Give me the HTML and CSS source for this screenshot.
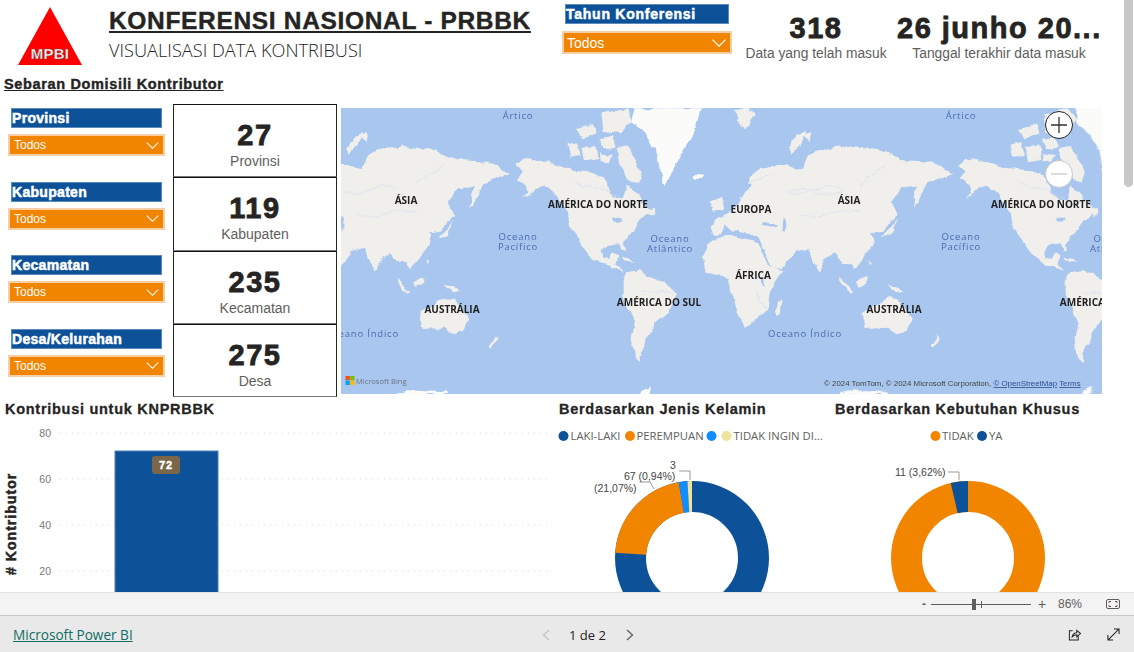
FILE: index.html
```html
<!DOCTYPE html>
<html lang="id">
<head>
<meta charset="utf-8">
<title>Konferensi Nasional - PRBBK</title>
<link rel="stylesheet" href="styles.css">
</head>
<body>
<svg class="defs" width="0" height="0" aria-hidden="true">
  <defs>
    <filter id="coast" x="-5%" y="-5%" width="110%" height="110%">
      <feTurbulence type="fractalNoise" baseFrequency="0.07" numOctaves="3" seed="4" result="n"/>
      <feDisplacementMap in="SourceGraphic" in2="n" scale="7" xChannelSelector="R" yChannelSelector="G"/>
      <feGaussianBlur stdDeviation="0.35"/>
    </filter>
    <symbol id="chev" viewBox="0 0 14 8"><path d="M.5.7 7 7.200 13.500.7" fill="none" stroke="#fff" stroke-width="1.200"/></symbol>
    <g id="world">
      <g class="land">
        <!-- North America -->
        <path d="M530,178 548,165 575,158 610,170 640,178 668,186 700,195 740,198 785,212 800,235 806,262 830,285 852,285 858,262 862,240 885,258 905,285 935,320 915,335 900,345 880,375 858,405 848,418 852,440 842,438 835,415 800,420 785,435 790,458 808,462 815,442 832,450 826,478 838,488 852,505 835,498 812,482 780,475 750,450 722,415 692,375 684,330 650,275 612,242 590,248 570,268 545,284 565,262 560,240 530,226 548,205Z"/>
        <!-- South America -->
        <path d="M858,502 900,495 950,522 985,545 1015,565 1000,600 985,622 950,650 925,690 905,735 895,775 882,762 875,700 885,650 862,605 848,565 848,530Z"/>
        <!-- Arctic Canada -->
        <path d="M682,118 715,112 725,150 690,155ZM728,125 770,125 775,165 735,172ZM830,130 860,120 905,200 895,232 865,225 838,180ZM785,25 860,12 880,45 840,85 790,78ZM705,72 760,60 770,85 725,100ZM775,100 815,92 828,125 790,130ZM780,145 815,150 805,172 782,168Z"/>
        <!-- Islands by the Americas -->
        <path d="M842,456 872,462 880,470 850,466ZM926,315 945,312 946,330 930,332Z"/>
        <g transform="translate(1182 0)">
          <!-- Eurasia -->
          <path d="M-67,372 -55,342 -25,328 -5,318 15,290 30,252 45,215 80,190 110,182 150,178 210,192 225,150 265,132 330,122 430,135 500,165 590,170 655,205 600,225 575,240 548,305 540,270 555,245 500,250 470,290 490,332 465,360 445,380 412,385 420,420 390,450 360,492 345,472 322,470 296,440 268,470 255,500 232,465 222,432 185,440 145,490 115,492 88,420 75,398 50,385 15,378 -5,380 -30,358 -42,385 -62,388Z"/>
          <!-- Africa -->
          <path d="M-97,460 -75,420 -50,395 0,392 50,405 78,418 110,488 150,495 125,530 108,560 100,610 65,650 32,668 12,630 0,595 -18,530 -50,510 -85,500Z"/>
          <!-- Australia and Oceania -->
          <path d="M385,622 430,598 445,585 470,580 492,582 505,605 530,640 515,680 490,690 460,668 395,672Z"/>
          <path d="M128,590 145,585 140,625 126,630ZM590,722 612,688 618,700 596,728ZM460,540 490,545 510,565 485,560ZM320,516 355,565 348,568 318,530ZM366,530 398,512 396,540 372,546ZM540,308 548,262 556,245 548,300ZM440,398 478,362 490,345 470,390ZM404,460 412,470 404,478Z"/>
          <!-- Europe islands, Svalbard, Novaya Zemlya -->
          <path d="M-70,290 -42,275 -32,315 -64,320ZM165,128 190,95 220,80 200,120 170,150ZM0,15 40,10 65,30 30,70 10,55ZM205,90 235,82 230,110Z"/>
        </g>
      </g>
      <path class="ice" d="M880,10 1082,10 1060,90 1010,180 975,245 960,200 950,140 920,90 880,50Z"/>
      <ellipse class="ice" cx="1078" cy="216" rx="14" ry="9"/>
      <path class="ice" d="M905,855 930,842 925,870 900,870ZM170,862 200,856 320,862 320,870 170,870Z"/>
      <g class="water">
        <ellipse cx="830" cy="344" rx="14" ry="6"/>
        <ellipse cx="1284" cy="356" rx="24" ry="6"/>
        <ellipse cx="1332" cy="358" rx="7" ry="22"/>
        <path d="M1190,260 1215,225 1230,240 1208,280Z"/>
        <ellipse cx="1270" cy="530" rx="4" ry="12"/>
      </g>
      <path class="rivers" d="M1340,260C1400,290 1440,220 1500,250M1380,330C1440,350 1500,300 1560,320M1220,230 1300,210M700,230C760,260 800,240 860,300M20,260C70,230 120,290 180,260M1560,240C1580,210 1620,200 1640,180M900,560C930,570 960,555 1000,565M1245,560C1250,590 1275,600 1280,615"/>
    </g>
  </defs>
</svg>

<main class="report">
  <header class="header">
    <svg class="logo" viewBox="0 0 64 58">
      <path d="M32 0 64 58H0Z" fill="#f00"/>
      <text x="32" y="52" class="logo-text">MPBI</text>
    </svg>
    <div class="titles">
      <h1 class="title">KONFERENSI NASIONAL - PRBBK</h1>
      <p class="subtitle">VISUALISASI DATA KONTRIBUSI</p>
    </div>
    <div class="year">
      <div class="slicer-title slicer-title-year">Tahun Konferensi</div>
      <div class="dropdown dropdown-year"><span>Todos</span><svg class="chev-year"><use href="#chev"/></svg></div>
    </div>
    <div class="kpi kpi-count">
      <div class="kpi-value">318</div>
      <div class="kpi-label">Data yang telah masuk</div>
    </div>
    <div class="kpi kpi-date">
      <div class="kpi-value">26 junho 20...</div>
      <div class="kpi-label">Tanggal terakhir data masuk</div>
    </div>
  </header>

  <h2 class="section-title">Sebaran Domisili Kontributor</h2>

  <section class="mid">
    <div class="filters">
      <div class="filter">
        <div class="slicer-title">Provinsi</div>
        <div class="dropdown"><span>Todos</span><svg class="chev"><use href="#chev"/></svg></div>
      </div>
      <div class="filter">
        <div class="slicer-title">Kabupaten</div>
        <div class="dropdown"><span>Todos</span><svg class="chev"><use href="#chev"/></svg></div>
      </div>
      <div class="filter">
        <div class="slicer-title">Kecamatan</div>
        <div class="dropdown"><span>Todos</span><svg class="chev"><use href="#chev"/></svg></div>
      </div>
      <div class="filter">
        <div class="slicer-title">Desa/Kelurahan</div>
        <div class="dropdown"><span>Todos</span><svg class="chev"><use href="#chev"/></svg></div>
      </div>
    </div>

    <div class="cards">
      <div class="card"><div class="card-value">27</div><div class="card-label">Provinsi</div></div>
      <div class="card"><div class="card-value">119</div><div class="card-label">Kabupaten</div></div>
      <div class="card"><div class="card-value">235</div><div class="card-label">Kecamatan</div></div>
      <div class="card"><div class="card-value">275</div><div class="card-label">Desa</div></div>
    </div>

    <div class="map">
      <svg class="map-svg" viewBox="341 108 761 286">
        <rect x="341" y="108" width="761" height="286" class="sea"/>
        <g filter="url(#coast)">
          <g transform="translate(340 105) scale(.33333)"><use href="#world"/></g>
          <g transform="translate(783 105) scale(.33333)"><use href="#world"/></g>
          <g transform="translate(-103 105) scale(.33333)"><use href="#world"/></g>
        </g>
        <g class="ocean">
          <text x="518" y="119">Ártico</text>
          <text x="961" y="119">Ártico</text>
          <text x="518" y="240">Oceano</text>
          <text x="518" y="250">Pacífico</text>
          <text x="961" y="240">Oceano</text>
          <text x="961" y="250">Pacífico</text>
          <text x="670" y="242">Oceano</text>
          <text x="670" y="252">Atlântico</text>
          <text x="362" y="337">Oceano Índico</text>
          <text x="805" y="337">Oceano Índico</text>
          <text x="1113" y="242">Oceano</text>
          <text x="1113" y="252">Atlântico</text>
        </g>
        <g class="continent">
          <text x="406" y="204">ÁSIA</text>
          <text x="849" y="204">ÁSIA</text>
          <text x="598" y="208">AMÉRICA DO NORTE</text>
          <text x="1041" y="208">AMÉRICA DO NORTE</text>
          <text x="751" y="213">EUROPA</text>
          <text x="753" y="279">ÁFRICA</text>
          <text x="452" y="313">AUSTRÁLIA</text>
          <text x="894" y="313">AUSTRÁLIA</text>
          <text x="659" y="306">AMÉRICA DO SUL</text>
          <text x="1102" y="306">AMÉRICA DO SUL</text>
        </g>
        <g>
          <rect x="345.500" y="376" width="4.300" height="4.300" fill="#f25022"/>
          <rect x="350.200" y="376" width="4.300" height="4.300" fill="#7fba00"/>
          <rect x="345.500" y="380.700" width="4.300" height="4.300" fill="#00a4ef"/>
          <rect x="350.200" y="380.700" width="4.300" height="4.300" fill="#ffb900"/>
          <text x="356" y="384" class="bing">Microsoft Bing</text>
        </g>
        <text x="824" y="386" class="attrib">© 2024 TomTom, © 2024 Microsoft Corporation, <tspan class="attrib-link">© OpenStreetMap</tspan>  <tspan class="attrib-link">Terms</tspan></text>
      </svg>
      <button class="zoom-btn zoom-in" aria-label="Ampliar"><svg viewBox="0 0 18 18"><path d="M9 1V17M1 9H17" stroke="#333" stroke-width="1.300" fill="none"/></svg></button>
      <button class="zoom-btn zoom-out" aria-label="Reduzir"><svg viewBox="0 0 18 18"><path d="M1 9H17" stroke="#c8c8c8" stroke-width="1.300" fill="none"/></svg></button>
    </div>
  </section>

  <section class="bottom">
    <div class="col col-bar">
      <h3 class="chart-title">Kontribusi untuk KNPRBBK</h3>
      <svg class="bar-chart" viewBox="0 0 554 172">
        <g class="grid">
          <line x1="60" x2="550" y1="13" y2="13"/>
          <line x1="60" x2="550" y1="59" y2="59"/>
          <line x1="60" x2="550" y1="105" y2="105"/>
          <line x1="60" x2="550" y1="151" y2="151"/>
        </g>
        <g class="axis">
          <text x="51" y="17">80</text>
          <text x="51" y="63">60</text>
          <text x="51" y="109">40</text>
          <text x="51" y="155">20</text>
        </g>
        <rect x="115" y="31" width="103" height="150" class="bar"/>
        <rect x="152" y="36" width="28" height="18" rx="3" class="badge"/>
        <text x="166" y="49" class="badge-text">72</text>
        <text transform="translate(16 155) rotate(-90)" class="axis-title"># Kontributor</text>
      </svg>
    </div>

    <div class="col col-gender">
      <h3 class="chart-title">Berdasarkan Jenis Kelamin</h3>
      <svg class="donut-chart" viewBox="555 420 280 172">
        <circle cx="563.500" cy="436" r="5" fill="#0d5298"/>
        <text x="570.500" y="440" class="legend">LAKI-LAKI</text>
        <circle cx="630" cy="436" r="5" fill="#f28500"/>
        <text x="636.500" y="440" class="legend">PEREMPUAN</text>
        <circle cx="711.500" cy="436" r="5" fill="#118dff"/>
        <circle cx="726.500" cy="436" r="5" fill="#efe29d"/>
        <text x="733.500" y="440" class="legend">TIDAK INGIN DI...</text>
        <g transform="rotate(-90 692 558)" fill="none" stroke-width="31">
          <circle cx="692" cy="558" r="61.500" stroke="#0d5298"/>
          <circle cx="692" cy="558" r="61.500" stroke="#f28500" pathLength="360" stroke-dasharray="76 284" stroke-dashoffset="-274"/>
          <circle cx="692" cy="558" r="61.500" stroke="#118dff" pathLength="360" stroke-dasharray="6.500 353.500" stroke-dashoffset="-350"/>
          <circle cx="692" cy="558" r="61.500" stroke="#efe29d" pathLength="360" stroke-dasharray="3.500 356.500" stroke-dashoffset="-356.500"/>
        </g>
        <path class="leader" d="M679 471H690V480M639.500 482H650L654 489"/>
        <text x="670" y="469" class="dl">3</text>
        <text x="624" y="480" class="dl">67 (0,94%)</text>
        <text x="594" y="492" class="dl">(21,07%)</text>
      </svg>
    </div>

    <div class="col col-need">
      <h3 class="chart-title">Berdasarkan Kebutuhan Khusus</h3>
      <svg class="donut-chart" viewBox="835 420 280 172">
        <circle cx="935.500" cy="436" r="5" fill="#f28500"/>
        <text x="942" y="440" class="legend">TIDAK</text>
        <circle cx="982" cy="436" r="5" fill="#0d5298"/>
        <text x="989" y="440" class="legend">YA</text>
        <g transform="rotate(-90 968 558)" fill="none" stroke-width="31">
          <circle cx="968" cy="558" r="61.500" stroke="#f28500"/>
          <circle cx="968" cy="558" r="61.500" stroke="#0d5298" pathLength="360" stroke-dasharray="13 347" stroke-dashoffset="-347"/>
        </g>
        <path class="leader" d="M948 472H959V480"/>
        <text x="895" y="476" class="dl">11 (3,62%)</text>
      </svg>
    </div>
  </section>

  <div class="scrollbar"></div>
</main>

<div class="zoombar">
  <span class="zb-minus">-</span>
  <div class="slider"><span class="slider-tick"></span><span class="slider-thumb"></span></div>
  <span class="zb-plus">+</span>
  <span class="zb-pct">86%</span>
  <svg class="zb-fit" viewBox="0 0 14 10"><rect x=".5" y=".5" width="13" height="9" rx="1.500" fill="none" stroke="#605e5c"/><path d="M3 4V2.500H5M9 2.500H11V4M11 6V7.500H9M5 7.500H3V6" fill="none" stroke="#605e5c"/></svg>
</div>

<footer class="footer">
  <a class="pbi-link" href="#">Microsoft Power BI</a>
  <nav class="pager">
    <svg class="pg-arrow" viewBox="0 0 8 12"><path d="M7 1 1.500 6 7 11" fill="none" stroke="#c4c4c4" stroke-width="1.300"/></svg>
    <span class="pg-text">1 de 2</span>
    <svg class="pg-arrow" viewBox="0 0 8 12"><path d="M1 1 6.500 6 1 11" fill="none" stroke="#605e5c" stroke-width="1.300"/></svg>
  </nav>
  <div class="foot-icons">
    <svg class="foot-icon" viewBox="0 0 14 14"><path d="M5 3H1.500V13H11V9M4.500 9.500C5 6.500 7.500 5 9.500 5V2.500L13.500 6 9.500 9.500V7.200C7.500 7.200 6 8 4.500 9.500Z" fill="none" stroke="#252423" stroke-width="1.100"/></svg>
    <svg class="foot-icon" viewBox="0 0 14 14"><path d="M1 13 13 1M7.500 1H13V6.500M1 7.500V13H6.500" fill="none" stroke="#252423" stroke-width="1.100"/></svg>
  </div>
</footer>
</body>
</html>
```

FILE: styles.css
```css
* { box-sizing: border-box; }
html, body { margin: 0; padding: 0; }
body {
  width: 1134px;
  height: 652px;
  overflow: hidden;
  background: #fff;
  color: #252423;
  font-family: "Liberation Sans", Arial, sans-serif;
}
.defs { position: absolute; }
h1, h2, h3, p { margin: 0; }

.report {
  position: relative;
  height: 592px;
  overflow: hidden;
  background: #fff;
}

/* header */
.header { display: flex; align-items: flex-start; height: 73px; }
.logo { width: 64px; height: 58px; margin: 7px 0 0 18px; flex: none; }
.logo-text {
  font: bold 15px "Liberation Sans", sans-serif;
  letter-spacing: .2px;
  text-anchor: middle;
  fill: #fff;
  stroke: #555;
  stroke-width: .4px;
}
.titles { width: 456px; margin-left: 27px; flex: none; }
.title {
  margin-top: 8px;
  font-size: 24.500px;
  line-height: 26px;
  font-weight: bold;
  letter-spacing: .67px;
  white-space: nowrap;
  text-decoration: underline;
  text-decoration-thickness: 2px;
  text-underline-offset: 2px;
  -webkit-text-stroke: .4px #252423;
}
.subtitle {
  margin-top: 5px;
  font: 300 18.200px/22px "Open Sans", sans-serif;
  white-space: nowrap;
}
.year { width: 169px; margin-left: -3px; padding-top: 4px; flex: none; }
.slicer-title {
  height: 20px;
  margin: 0 3px;
  width: 151px;
  background: #0d5298;
  border: 1px solid #5c8bbb;
  color: #fff;
  font-size: 14px;
  line-height: 18px;
  font-weight: bold;
  letter-spacing: .3px;
  -webkit-text-stroke: .5px #fff;
  white-space: nowrap;
}
.slicer-title-year { width: 164px; letter-spacing: .75px; line-height: 19px; }
.dropdown {
  display: flex;
  align-items: center;
  justify-content: space-between;
  height: 22px;
  margin-top: 6px;
  padding: 0 4px 0 4px;
  background: #f28500;
  border: 2px solid #f6cfa6;
  color: #fff;
  font-size: 12px;
}
.dropdown-year { width: 170px; height: 23px; margin-top: 7px; padding-left: 3px; font-size: 14px; }
.chev { width: 13px; height: 7px; }
.chev-year { width: 14px; height: 8px; }

.kpi { text-align: center; flex: none; }
.kpi-value {
  margin-top: 13px;
  font-size: 29px;
  line-height: 30px;
  font-weight: bold;
  letter-spacing: 1.500px;
  -webkit-text-stroke: .8px #252423;
  white-space: nowrap;
}
.kpi-label { margin-top: 2px; font-size: 13.800px; line-height: 18px; color: #605e5c; white-space: nowrap; }
.kpi-count { width: 142px; margin-left: 14px; }
.kpi-date { width: 204px; margin-left: 10px; }

.section-title {
  height: 31px;
  margin-left: 4px;
  font-size: 14.500px;
  line-height: 22px;
  font-weight: bold;
  letter-spacing: .65px;
  text-decoration: underline;
  -webkit-text-stroke: .4px #252423;
}

/* middle */
.mid { display: flex; height: 294px; padding-left: 8px; }
.filters { width: 157px; padding-top: 4px; flex: none; }
.filter { height: 73.500px; }
.cards { width: 164px; margin-left: 8px; flex: none; display: flex; flex-direction: column; }
.card {
  height: 73.250px;
  text-align: center;
  border: 1px solid #252423;
  border-bottom-color: #777;
  border-top-color: #111;
}
.card-value {
  margin-top: 15px;
  font-size: 29px;
  line-height: 30px;
  font-weight: bold;
  letter-spacing: 1.500px;
  -webkit-text-stroke: .8px #252423;
}
.card-label { margin-top: 3px; font-size: 14px; line-height: 17px; color: #605e5c; }

.map { position: relative; width: 761px; height: 286px; margin: 4px 0 0 4px; flex: none; }
.map-svg { display: block; width: 761px; height: 286px; }
.sea { fill: #a9c6ef; }
.land { fill: #f0efec; }
.ice { fill: #fbfbfa; }
.water { fill: #a9c6ef; }
.rivers { fill: none; stroke: #cfdcf0; stroke-width: 2; }
.ocean text {
  font: 9.500px "Open Sans", sans-serif;
  letter-spacing: .8px;
  text-anchor: middle;
  fill: #4a6db0;
}
.continent text {
  font: 700 10px "Open Sans", sans-serif;
  text-anchor: middle;
  fill: #1f1f1f;
}
.bing { font: 7.500px "Open Sans", sans-serif; fill: #6a7480; }
.attrib { font: 7.900px "Liberation Sans", sans-serif; fill: #444; }
.attrib-link { fill: #2a4e92; text-decoration: underline; }
.zoom-btn {
  position: absolute;
  left: 704px;
  width: 28px;
  height: 28px;
  padding: 4px;
  border-radius: 50%;
  background: #fff;
  display: flex;
}
.zoom-in { top: 3px; border: 1px solid #222; }
.zoom-out { top: 52px; border: 1px solid #c8c8c8; }
.zoom-btn svg { width: 18px; height: 18px; }

/* bottom */
.bottom { display: flex; height: 194px; }
.col { flex: none; }
.col-bar { width: 555px; }
.col-gender { width: 280px; }
.col-need { width: 280px; }
.chart-title {
  height: 22px;
  font-size: 14.500px;
  line-height: 22px;
  font-weight: bold;
  letter-spacing: .72px;
  -webkit-text-stroke: .3px #252423;
  white-space: nowrap;
}
.col-bar .chart-title { padding-left: 5px; }
.col-gender .chart-title { padding-left: 4px; }
.bar-chart { display: block; width: 554px; height: 172px; }
.donut-chart { display: block; width: 280px; height: 172px; }
.grid line { stroke: #d4d4d4; stroke-width: 1; stroke-dasharray: 1 5; }
.axis text { font: 10.500px "Liberation Sans", sans-serif; fill: #777; text-anchor: end; }
.bar { fill: #0d5298; stroke: #4f80b5; stroke-width: 1; }
.badge { fill: #7b6649; }
.badge-text {
  font: bold 11px "Liberation Sans", sans-serif;
  letter-spacing: 1px;
  fill: #fff;
  stroke: #fff;
  stroke-width: .4px;
  text-anchor: middle;
}
.axis-title {
  font: bold 14px "Liberation Sans", sans-serif;
  letter-spacing: 1.050px;
  fill: #252423;
  stroke: #252423;
  stroke-width: .5px;
}
.legend { font: 11.300px "Open Sans", sans-serif; fill: #605e5c; }
.dl { font: 10.500px "Liberation Sans", sans-serif; fill: #444; }
.leader { fill: none; stroke: #999; stroke-width: 1; }

.scrollbar {
  position: absolute;
  top: 0;
  left: 1124px;
  width: 9px;
  height: 187px;
  border-radius: 0 0 5px 5px;
  background: #c8c8c8;
}

/* zoom bar */
.zoombar {
  display: flex;
  align-items: center;
  height: 24px;
  padding-left: 922px;
  background: #f3f3f3;
  border-top: 1px solid #e2e2e2;
  border-bottom: 1px solid #c8c8c8;
  color: #605e5c;
  font-size: 12px;
}
.zb-minus { width: 9px; font-weight: bold; }
.slider { position: relative; width: 100px; height: 1px; background: #605e5c; }
.slider-thumb { position: absolute; left: 41px; top: -5px; width: 4px; height: 11px; background: #605e5c; }
.slider-tick { position: absolute; left: 50px; top: -3px; width: 1px; height: 7px; background: #605e5c; }
.zb-plus { margin-left: 7px; font-size: 14px; width: 20px; }
.zb-pct { width: 48px; }
.zb-fit { width: 14px; height: 10px; }

/* footer */
.footer {
  position: relative;
  display: flex;
  align-items: center;
  height: 36px;
  padding-left: 13px;
  background: #e9e9e9;
}
.pbi-link { font: 13.600px "Open Sans", sans-serif; color: #0f6d66; text-decoration: underline; }
.pager {
  position: absolute;
  left: 542px;
  top: 12px;
  display: flex;
  align-items: center;
}
.pg-arrow { width: 8px; height: 12px; }
.pg-text { width: 37px; margin: 0 20px 0 19px; font: 500 13px/14px "Open Sans", sans-serif; color: #252423; white-space: nowrap; }
.foot-icons { position: absolute; left: 1068px; top: 12px; display: flex; gap: 26px; }
.foot-icon { width: 13px; height: 13px; }
```
